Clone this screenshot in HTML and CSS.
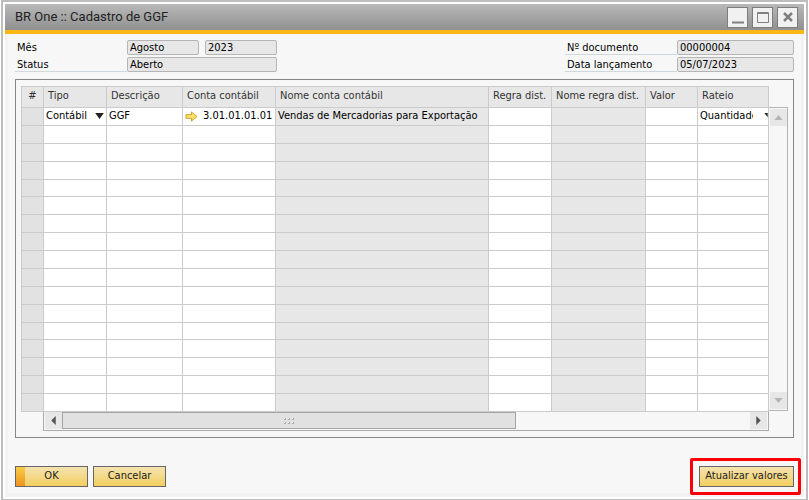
FILE: index.html
```html
<!DOCTYPE html>
<html lang="pt-BR">
<head>
<meta charset="utf-8">
<title>BR One :: Cadastro de GGF</title>
<link rel="stylesheet" href="styles.css">
</head>
<body>
<main class="window">
  <header class="titlebar">
    <h1>BR One :: Cadastro de GGF</h1>
    <div class="controls">
      <button type="button" aria-label="Minimizar"><svg viewBox="0 0 18 18"><path d="M3 14.500h12" stroke-width="2"/></svg></button>
      <button type="button" aria-label="Maximizar"><svg viewBox="0 0 18 18"><path d="M3.500 4.500h11v10h-11z M3 5.500h12" stroke-width="1"/></svg></button>
      <button type="button" aria-label="Fechar"><svg viewBox="0 0 18 18"><path d="M5 5l8 8M13 5l-8 8" stroke-width="2.500"/></svg></button>
    </div>
  </header>
  <form class="body">
    <div class="fields">
      <div class="group">
        <div class="row"><label for="mes">Mês</label><input id="mes" value="Agosto" readonly><input value="2023" aria-label="Ano" readonly></div>
        <div class="row line"><label for="status">Status</label><input id="status" value="Aberto" readonly></div>
      </div>
      <div class="group doc">
        <div class="row line"><label for="num">Nº documento</label><input id="num" value="00000004" readonly></div>
        <div class="row line"><label for="data">Data lançamento</label><input id="data" value="05/07/2023" readonly></div>
      </div>
    </div>
    <section class="panel">
      <table>
        <colgroup><col class="c-num"><col class="c-tipo"><col class="c-desc"><col class="c-conta"><col class="c-nome"><col class="c-regra"><col class="c-nregra"><col class="c-valor"><col></colgroup>
        <thead><tr><th>#</th><th>Tipo</th><th>Descrição</th><th>Conta contábil</th><th>Nome conta contábil</th><th>Regra dist.</th><th>Nome regra dist.</th><th>Valor</th><th>Rateio</th></tr></thead>
        <tbody>
          <tr><td></td><td><div class="pick"><select aria-label="Tipo"><option>Contábil</option></select><svg viewBox="0 0 10 7"><path d="M0 0h10L5 7z"/></svg></div></td><td>GGF</td><td><div class="account"><svg viewBox="0 0 14 12"><path d="M1 4h6V1l6 5-6 5V8H1z"/></svg>3.01.01.01.01</div></td><td>Vendas de Mercadorias para Exportação</td><td></td><td></td><td></td><td><div class="pick cut"><select aria-label="Rateio"><option>Quantidade</option></select><svg viewBox="0 0 4 7"><path d="M0 0h4v5z"/></svg></div></td></tr>
          <tr><td></td><td></td><td></td><td></td><td></td><td></td><td></td><td></td><td></td></tr>
          <tr><td></td><td></td><td></td><td></td><td></td><td></td><td></td><td></td><td></td></tr>
          <tr><td></td><td></td><td></td><td></td><td></td><td></td><td></td><td></td><td></td></tr>
          <tr><td></td><td></td><td></td><td></td><td></td><td></td><td></td><td></td><td></td></tr>
          <tr><td></td><td></td><td></td><td></td><td></td><td></td><td></td><td></td><td></td></tr>
          <tr><td></td><td></td><td></td><td></td><td></td><td></td><td></td><td></td><td></td></tr>
          <tr><td></td><td></td><td></td><td></td><td></td><td></td><td></td><td></td><td></td></tr>
          <tr><td></td><td></td><td></td><td></td><td></td><td></td><td></td><td></td><td></td></tr>
          <tr><td></td><td></td><td></td><td></td><td></td><td></td><td></td><td></td><td></td></tr>
          <tr><td></td><td></td><td></td><td></td><td></td><td></td><td></td><td></td><td></td></tr>
          <tr><td></td><td></td><td></td><td></td><td></td><td></td><td></td><td></td><td></td></tr>
          <tr><td></td><td></td><td></td><td></td><td></td><td></td><td></td><td></td><td></td></tr>
          <tr><td></td><td></td><td></td><td></td><td></td><td></td><td></td><td></td><td></td></tr>
          <tr><td></td><td></td><td></td><td></td><td></td><td></td><td></td><td></td><td></td></tr>
          <tr><td></td><td></td><td></td><td></td><td></td><td></td><td></td><td></td><td></td></tr>
          <tr><td></td><td></td><td></td><td></td><td></td><td></td><td></td><td></td><td></td></tr>
        </tbody>
      </table>
      <div class="vscroll">
        <button type="button" aria-label="Rolar para cima"><svg viewBox="0 0 10 6"><path d="M0 6h10L5 0z"/></svg></button>
        <button type="button" aria-label="Rolar para baixo"><svg viewBox="0 0 10 6"><path d="M0 0h10L5 6z"/></svg></button>
      </div>
      <div class="hscroll">
        <button type="button" aria-label="Rolar para a esquerda"><svg viewBox="0 0 5 10"><path d="M5 0v10L0 5z"/></svg></button>
        <div class="track"><div class="thumb"><svg viewBox="0 0 10 8"><path class="dot" d="M0 1h2v2H0zM4 1h2v2H4zM8 1h2v2H8zM0 5h2v2H0zM4 5h2v2H4zM8 5h2v2H8z"/><path class="shine" d="M0 1h1v1H0zM4 1h1v1H4zM8 1h1v1H8zM0 5h1v1H0zM4 5h1v1H4zM8 5h1v1H8z"/></svg></div></div>
        <button type="button" aria-label="Rolar para a direita"><svg viewBox="0 0 5 10"><path d="M0 0v10l5-5z"/></svg></button>
      </div>
    </section>
    <footer class="actions">
      <button type="button" class="btn default">OK</button>
      <button type="button" class="btn">Cancelar</button>
      <div class="marked"><button type="button" class="btn wide">Atualizar valores</button></div>
    </footer>
  </form>
</main>
</body>
</html>
```
FILE: styles.css
```css
* { box-sizing: border-box; }
body {
  margin: 0;
  background: #fff;
  color: #000;
  font: 11px/14px "DejaVu Sans Condensed", "DejaVu Sans", sans-serif;
  font-stretch: condensed;
}
button, input, select { font: inherit; color: inherit; margin: 0; padding: 0; border-radius: 0; }
svg { display: block; flex: none; }
.window {
  min-height: 100vh;
  display: flex;
  flex-direction: column;
  margin: 0 1px;
  border: 2px solid #bdbdbd;
  border-bottom-width: 1px;
  padding: 2px;
  background: #fff;
}
.titlebar {
  height: 30px;
  display: flex;
  align-items: center;
  justify-content: space-between;
  padding: 0 6px 0 10px;
  background: linear-gradient(#b9b9b9, #909090);
  border-bottom: 4px solid #fdb813;
}
.titlebar h1 { margin: 0; font: 13px/20px Roboto, sans-serif; color: #222; }
.controls { display: flex; gap: 4px; }
.controls button {
  display: grid;
  place-items: center;
  width: 21px;
  height: 21px;
  background: #f1f1f1;
  border: 1px solid #7d7d7d;
}
.controls svg { width: 18px; height: 18px; fill: none; stroke: #808080; }
.body {
  flex: 1;
  background: #f7f7f7;
  border: solid #f2f2f2;
  border-width: 0 3px 4px;
  padding: 6px 7px 0;
}
.fields { display: flex; justify-content: space-between; }
.group { width: 262px; display: grid; grid-template-columns: minmax(0, 1fr); gap: 2px; }
.doc { width: 229px; }
.row { display: flex; gap: 6px; height: 15px; }
.row label { flex: none; width: 112px; margin-right: -6px; padding: 1px 2px 0; }
.line label { border-bottom: 1px solid #cfd8df; }
.row input {
  flex: 1;
  min-width: 0;
  height: 15px;
  padding: 0 2px;
  background: #e7e7e7;
  border: 1px solid #b5b5b5;
  border-radius: 2px;
  outline: 0;
}
.panel {
  display: grid;
  grid-template-columns: minmax(0, 1fr) 19px;
  margin-top: 7px;
  padding: 6px 5px;
  border: 1px solid #868686;
}
table { table-layout: fixed; width: 100%; height: 326px; border-collapse: collapse; }
th, td { padding: 0; border: 1px solid #cbcbcb; overflow: hidden; white-space: nowrap; text-align: left; font-weight: normal; line-height: 14px; }
th { height: 21px; padding: 0 4px 2px; background: #e7e7e7; color: #333; }
th:first-child { text-align: center; padding: 0 0 2px; }
td { height: 17px; background: #fff; padding: 0 2px; }
td:first-child, td:nth-child(5), td:nth-child(7) { background: #e7e7e7; }
td:first-child { background: #e2e2e2; }
.c-num { width: 22px; }
.c-tipo { width: 63px; }
.c-desc { width: 76px; }
.c-conta { width: 93px; }
.c-nome { width: 213px; }
.c-regra { width: 63px; }
.c-nregra { width: 94px; }
.c-valor { width: 52px; }
.pick { display: flex; justify-content: space-between; align-items: center; }
.pick select { appearance: none; border: 0; background: none; outline: 0; width: 46px; height: 14px; }
.pick svg { width: 9px; height: 6px; fill: #222; }
.cut { margin-right: -2px; }
.cut select { width: 53px; }
.cut svg { width: 4px; }
.account { display: flex; align-items: center; gap: 5px; }
.account svg { width: 13px; height: 11px; fill: #fbe36a; stroke: #c89b1c; }
.vscroll {
  display: flex;
  flex-direction: column;
  justify-content: space-between;
  margin: 21px 0 1px;
  padding: 1px;
  border: solid #b5b5b5;
  border-width: 1px 1px 1px 0;
}
.vscroll button, .hscroll button {
  display: grid;
  place-items: center;
  width: 17px;
  height: 17px;
  border: 0;
  background: #e7e7e7;
}
.vscroll svg { width: 9px; height: 5px; fill: #b5b5b5; }
.hscroll {
  display: flex;
  height: 19px;
  margin-left: 22px;
  border: 1px solid #ababab;
  border-top: 0;
  padding: 0 1px 1px;
}
.hscroll > button svg { width: 5px; height: 9px; fill: #555; }
.track { flex: 1; }
.thumb {
  display: grid;
  place-items: center;
  width: 66%;
  height: 17px;
  border: 1px solid #a5a5a5;
  background: #e1e1e1;
}
.thumb svg { width: 10px; height: 8px; }
.dot { fill: #aaa; }
.shine { fill: #fff; }
.actions { display: flex; gap: 5px; margin-top: 28px; }
.btn {
  width: 73px;
  height: 21px;
  padding-bottom: 2px;
  border: 1px solid #66666a;
  background: linear-gradient(#f5e3b0, #f3cf5e);
  color: #222;
}
.default { background: linear-gradient(#f8cc45, #ee9420) 0 0 / 9px 100% no-repeat, linear-gradient(#f5e3b0, #f3cf5e); }
.wide { width: 95px; }
.marked { position: relative; margin-left: auto; }
.marked::after {
  content: "";
  position: absolute;
  inset: -8px -7px -8px -9px;
  border: 3px solid #fb0007;
  border-radius: 2px;
  pointer-events: none;
}
```
